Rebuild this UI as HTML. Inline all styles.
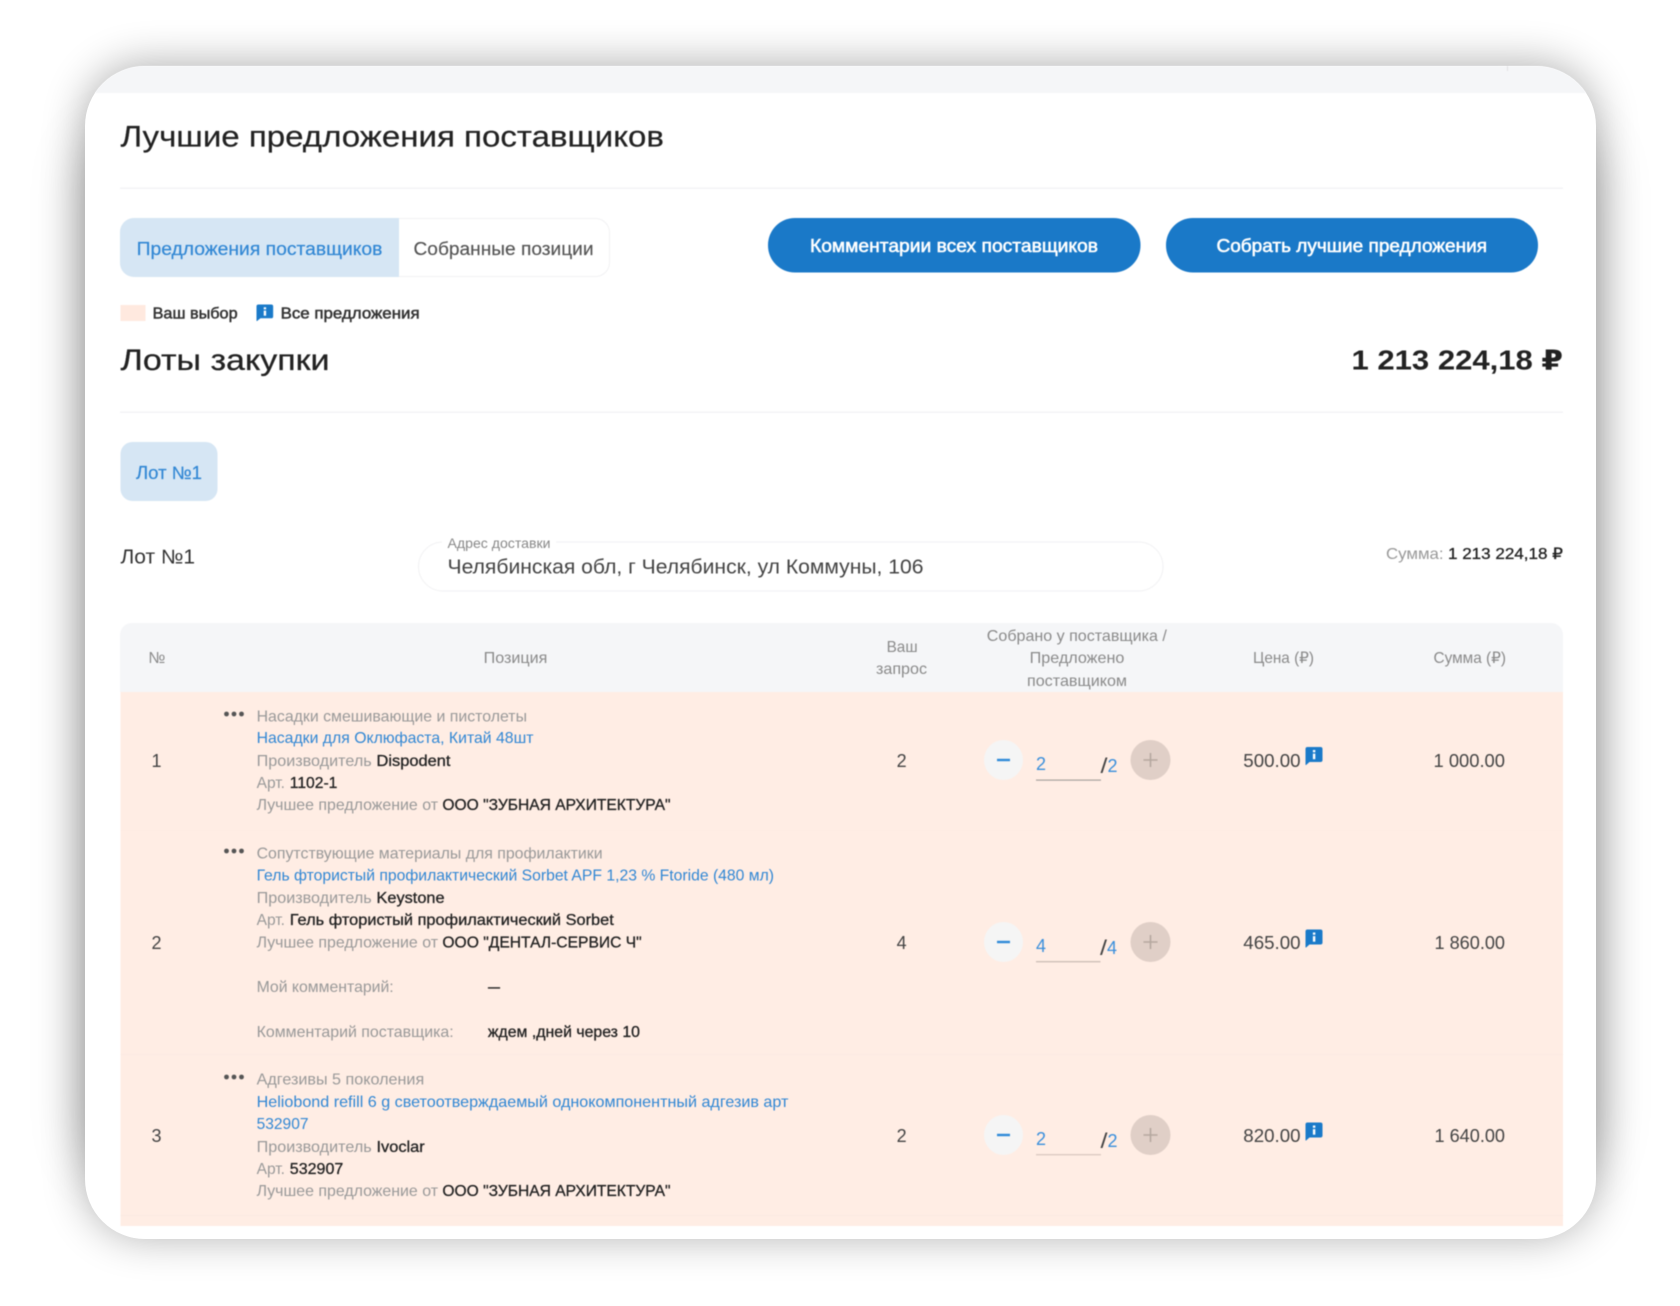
<!DOCTYPE html>
<html lang="ru">
<head>
<meta charset="utf-8">
<title>Лучшие предложения поставщиков</title>
<style>
html,body{margin:0;padding:0;background:#fff;width:1680px;height:1306px;overflow:hidden}
#side{position:absolute;left:85px;top:136px;width:1511px;height:1033px;border-radius:40px;box-shadow:0 0 52px rgba(0,0,0,.26)}
#card{position:absolute;left:85px;top:66px;width:1511px;height:1173px;border-radius:60px;background:#fff;box-shadow:0 -2px 42px rgba(0,0,0,.32)}
svg{position:absolute;left:0;top:0;filter:blur(.4px)}
text{font-family:"Liberation Sans","DejaVu Sans",sans-serif;font-size:16px;fill:#999}
.d{fill:#222;stroke:#222;stroke-width:.3px}
.b{fill:#3187d4}
.h{fill:#8a8a8a}
.n{font-size:18px;fill:#444}
.c{font-size:18px;fill:#3a8fdc}
</style>
</head>
<body>
<div id="side"></div>
<div id="card"></div>
<svg width="1680" height="1306" viewBox="0 0 1680 1306" xmlns="http://www.w3.org/2000/svg">
<defs>
<clipPath id="cc"><rect x="85" y="66" width="1511" height="1173" rx="60"/></clipPath>
<g id="ic"><path d="M0 2a2 2 0 0 1 2-2h13a2 2 0 0 1 2 2v11a2 2 0 0 1-2 2H4L.6 18H0z" fill="#1a7ac9"/><rect x="7.4" y="3" width="2.4" height="2.3" fill="#fff"/><rect x="7.4" y="6.6" width="2.4" height="5.6" fill="#fff"/></g>
<g id="dots" fill="#555"><circle cx="226.5" cy="0" r="2.4"/><circle cx="234" cy="0" r="2.4"/><circle cx="241.5" cy="0" r="2.4"/></g>
<g id="step">
<ellipse cx="1003.5" cy="0" rx="19.5" ry="20" fill="#f5f5f5"/>
<rect x="997" y="-1.2" width="13" height="2.4" fill="#2f8ad8"/>
<ellipse cx="1150.5" cy="0" rx="20" ry="20" fill="#e0cfc7"/>
<path d="M1143.5 0h14M1150.5 -7v14" stroke="#b5a89f" stroke-width="1.6" fill="none"/>
</g>
</defs>

<g clip-path="url(#cc)"><rect x="85" y="66" width="1511" height="27" fill="#f5f6f8"/><rect x="1507" y="66" width="1" height="5" fill="#e2e2e4"/></g>

<text x="120.5" y="146.5" textLength="543.5" lengthAdjust="spacingAndGlyphs" style="font-size:30px;fill:#222;stroke:#222;stroke-width:.2px">Лучшие предложения поставщиков</text>
<rect x="120" y="187.5" width="1443" height="1.4" fill="#f3f3f5"/>

<rect x="120.5" y="218.5" width="489" height="58" rx="14" fill="#fff" stroke="#f1f1f3"/>
<path d="M399 218H134a14 14 0 0 0-14 14v31a14 14 0 0 0 14 14h265z" fill="#d6e6f4"/>
<text x="136.6" y="255" textLength="245.8" lengthAdjust="spacingAndGlyphs" class="b" style="font-size:18px;stroke:#3187d4;stroke-width:.2px">Предложения поставщиков</text>
<text x="413.5" y="255" textLength="180" lengthAdjust="spacingAndGlyphs" style="font-size:18px;fill:#555;stroke:#555;stroke-width:.15px">Собранные позиции</text>

<rect x="768" y="218" width="372.5" height="54.5" rx="27" fill="#1a79c8"/>
<text x="810" y="252" textLength="288" lengthAdjust="spacingAndGlyphs" style="font-size:18px;fill:#fff;stroke:#fff;stroke-width:.55px">Комментарии всех поставщиков</text>
<rect x="1166" y="218" width="372" height="54.5" rx="27" fill="#1a79c8"/>
<text x="1216.5" y="252" textLength="270.5" lengthAdjust="spacingAndGlyphs" style="font-size:18px;fill:#fff;stroke:#fff;stroke-width:.55px">Собрать лучшие предложения</text>

<rect x="120.5" y="305" width="25" height="16" fill="#ffe9df"/>
<text x="152.6" y="318.5" textLength="85" lengthAdjust="spacingAndGlyphs" class="d" style="fill:#333;stroke:#333;stroke-width:.5px">Ваш выбор</text>
<use href="#ic" transform="translate(256.5 304.5) scale(.98 .92)"/>
<text x="280.6" y="318.5" textLength="139" lengthAdjust="spacingAndGlyphs" class="d" style="fill:#333;stroke:#333;stroke-width:.5px">Все предложения</text>

<text x="120.5" y="370" textLength="209" lengthAdjust="spacingAndGlyphs" style="font-size:30px;fill:#222;stroke:#222;stroke-width:.25px">Лоты закупки</text>
<text x="1351.5" y="369.5" textLength="211.5" lengthAdjust="spacingAndGlyphs" style="font-size:28px;font-weight:bold;fill:#222">1 213 224,18 ₽</text>
<rect x="120" y="411.5" width="1443" height="1.4" fill="#f3f3f5"/>

<rect x="120.5" y="442" width="97" height="59" rx="12" fill="#d6e6f4"/>
<text x="136" y="479" textLength="66" lengthAdjust="spacingAndGlyphs" class="b" style="font-size:18px;stroke:#3187d4;stroke-width:.2px">Лот №1</text>

<text x="120.5" y="563.5" textLength="74.5" lengthAdjust="spacingAndGlyphs" style="font-size:20px;fill:#333">Лот №1</text>

<rect x="418.5" y="542" width="744.5" height="49" rx="24.5" fill="#fff" stroke="#f1f1f3"/>
<rect x="442" y="538" width="114" height="8" fill="#fff"/>
<text x="447.5" y="548" textLength="103" lengthAdjust="spacingAndGlyphs" style="font-size:14px;fill:#888">Адрес доставки</text>
<text x="447.5" y="573.5" textLength="476" lengthAdjust="spacingAndGlyphs" style="font-size:20px;fill:#444">Челябинская обл, г Челябинск, ул Коммуны, 106</text>

<text x="1386" y="559" textLength="57.6" lengthAdjust="spacingAndGlyphs">Сумма:</text>
<text x="1448" y="559" textLength="115" lengthAdjust="spacingAndGlyphs" class="d">1 213 224,18 ₽</text>

<path d="M120 692v-57a12 12 0 0 1 12-12h1419a12 12 0 0 1 12 12v57z" fill="#f5f6f8"/>
<text x="148.4" y="663" textLength="17" lengthAdjust="spacingAndGlyphs" class="h">№</text>
<text x="483.7" y="663" textLength="63.7" lengthAdjust="spacingAndGlyphs" class="h">Позиция</text>
<text x="886.6" y="652" textLength="31" lengthAdjust="spacingAndGlyphs" class="h">Ваш</text>
<text x="876" y="674" textLength="51" lengthAdjust="spacingAndGlyphs" class="h">запрос</text>
<text x="986.8" y="641" textLength="180" lengthAdjust="spacingAndGlyphs" class="h">Собрано у поставщика /</text>
<text x="1029.6" y="663" textLength="94.8" lengthAdjust="spacingAndGlyphs" class="h">Предложено</text>
<text x="1027" y="686" textLength="100" lengthAdjust="spacingAndGlyphs" class="h">поставщиком</text>
<text x="1253" y="663" textLength="61" lengthAdjust="spacingAndGlyphs" class="h">Цена (₽)</text>
<text x="1433.5" y="663" textLength="72.5" lengthAdjust="spacingAndGlyphs" class="h">Сумма (₽)</text>

<rect x="120.5" y="692" width="1442.5" height="534" fill="#ffede4"/>
<rect x="120.5" y="830" width="1442.5" height="1" fill="#feece3"/>
<rect x="120.5" y="1054" width="1442.5" height="1" fill="#fceae2"/>
<rect x="120.5" y="1215" width="1442.5" height="1" fill="#fae9e1"/>

<!-- Row 1 -->
<text x="156.5" y="767" text-anchor="middle" class="n">1</text>
<use href="#dots" y="714"/>
<text x="256.6" y="721.5" textLength="270.4" lengthAdjust="spacingAndGlyphs">Насадки смешивающие и пистолеты</text>
<text x="256.6" y="743" textLength="276.9" lengthAdjust="spacingAndGlyphs" class="b">Насадки для Оклюфаста, Китай 48шт</text>
<text x="256.6" y="766" textLength="115.1" lengthAdjust="spacingAndGlyphs">Производитель</text>
<text x="376.5" y="766" textLength="74" lengthAdjust="spacingAndGlyphs" class="d">Dispodent</text>
<text x="256.6" y="788" textLength="28.4" lengthAdjust="spacingAndGlyphs">Арт.</text>
<text x="289.8" y="788" textLength="47.6" lengthAdjust="spacingAndGlyphs" class="d">1102-1</text>
<text x="256.6" y="810" textLength="181.4" lengthAdjust="spacingAndGlyphs">Лучшее предложение от</text>
<text x="442.4" y="810" textLength="228.2" lengthAdjust="spacingAndGlyphs" class="d">ООО "ЗУБНАЯ АРХИТЕКТУРА"</text>
<text x="901.6" y="767" text-anchor="middle" class="n">2</text>
<use href="#step" y="760"/>
<text x="1036" y="770" class="c">2</text>
<rect x="1036" y="779.5" width="65" height="1.2" fill="#a8a29d"/>
<text x="1100.5" y="773" textLength="7" lengthAdjust="spacingAndGlyphs" class="n" style="font-size:21px">/</text><text x="1107.5" y="772" class="c">2</text>
<text x="1243.3" y="767" textLength="57.3" lengthAdjust="spacingAndGlyphs" class="n">500.00</text>
<use href="#ic" transform="translate(1305.5 747)"/>
<text x="1433.5" y="767" textLength="71.5" lengthAdjust="spacingAndGlyphs" class="n">1 000.00</text>

<!-- Row 2 -->
<text x="156.5" y="949" text-anchor="middle" class="n">2</text>
<use href="#dots" y="851"/>
<text x="256.6" y="858.5" textLength="346" lengthAdjust="spacingAndGlyphs">Сопутствующие материалы для профилактики</text>
<text x="256.6" y="880.5" textLength="517.4" lengthAdjust="spacingAndGlyphs" class="b">Гель фтористый профилактический Sorbet APF 1,23 % Ftoride (480 мл)</text>
<text x="256.6" y="903" textLength="115.1" lengthAdjust="spacingAndGlyphs">Производитель</text>
<text x="376.5" y="903" textLength="68.1" lengthAdjust="spacingAndGlyphs" class="d">Keystone</text>
<text x="256.6" y="925" textLength="28.4" lengthAdjust="spacingAndGlyphs">Арт.</text>
<text x="289.8" y="925" textLength="324" lengthAdjust="spacingAndGlyphs" class="d">Гель фтористый профилактический Sorbet</text>
<text x="256.6" y="947.5" textLength="181.4" lengthAdjust="spacingAndGlyphs">Лучшее предложение от</text>
<text x="442.4" y="947.5" textLength="199.3" lengthAdjust="spacingAndGlyphs" class="d">ООО "ДЕНТАЛ-СЕРВИС Ч"</text>
<text x="256.6" y="992" textLength="137.1" lengthAdjust="spacingAndGlyphs">Мой комментарий:</text>
<text x="488" y="992" textLength="12" lengthAdjust="spacingAndGlyphs" class="d">—</text>
<text x="256.6" y="1037" textLength="197.1" lengthAdjust="spacingAndGlyphs">Комментарий поставщика:</text>
<text x="487.9" y="1037" textLength="152.1" lengthAdjust="spacingAndGlyphs" class="d">ждем ,дней через 10</text>
<text x="901.6" y="949" text-anchor="middle" class="n">4</text>
<use href="#step" y="942"/>
<text x="1036" y="952" class="c">4</text>
<rect x="1036" y="961" width="64.5" height="1.4" fill="#cfc0b8"/>
<text x="1100" y="955" textLength="7" lengthAdjust="spacingAndGlyphs" class="n" style="font-size:21px">/</text><text x="1107" y="954" class="c">4</text>
<text x="1243.3" y="949" textLength="57.3" lengthAdjust="spacingAndGlyphs" class="n">465.00</text>
<use href="#ic" transform="translate(1305.5 929.5)"/>
<text x="1434.5" y="949" textLength="70.5" lengthAdjust="spacingAndGlyphs" class="n">1 860.00</text>

<!-- Row 3 -->
<text x="156.5" y="1142" text-anchor="middle" class="n">3</text>
<use href="#dots" y="1077"/>
<text x="256.6" y="1084.5" textLength="167.6" lengthAdjust="spacingAndGlyphs">Адгезивы 5 поколения</text>
<text x="256.6" y="1107" textLength="531.8" lengthAdjust="spacingAndGlyphs" class="b">Heliobond refill 6 g светоотверждаемый однокомпонентный адгезив арт</text>
<text x="256.6" y="1129" textLength="51.9" lengthAdjust="spacingAndGlyphs" class="b">532907</text>
<text x="256.6" y="1152" textLength="115.1" lengthAdjust="spacingAndGlyphs">Производитель</text>
<text x="376.5" y="1152" textLength="48.2" lengthAdjust="spacingAndGlyphs" class="d">Ivoclar</text>
<text x="256.6" y="1174" textLength="28.4" lengthAdjust="spacingAndGlyphs">Арт.</text>
<text x="289.8" y="1174" textLength="53.5" lengthAdjust="spacingAndGlyphs" class="d">532907</text>
<text x="256.6" y="1196" textLength="181.4" lengthAdjust="spacingAndGlyphs">Лучшее предложение от</text>
<text x="442.4" y="1196" textLength="228.2" lengthAdjust="spacingAndGlyphs" class="d">ООО "ЗУБНАЯ АРХИТЕКТУРА"</text>
<text x="901.6" y="1142" text-anchor="middle" class="n">2</text>
<use href="#step" y="1135"/>
<text x="1036" y="1145" class="c">2</text>
<rect x="1036" y="1154" width="65" height="1.4" fill="#dccbc2"/>
<text x="1100.5" y="1148" textLength="7" lengthAdjust="spacingAndGlyphs" class="n" style="font-size:21px">/</text><text x="1107.5" y="1147" class="c">2</text>
<text x="1243.3" y="1142" textLength="57.3" lengthAdjust="spacingAndGlyphs" class="n">820.00</text>
<use href="#ic" transform="translate(1305.5 1122.5)"/>
<text x="1434.5" y="1142" textLength="70.5" lengthAdjust="spacingAndGlyphs" class="n">1 640.00</text>
</svg>
</body>
</html>
